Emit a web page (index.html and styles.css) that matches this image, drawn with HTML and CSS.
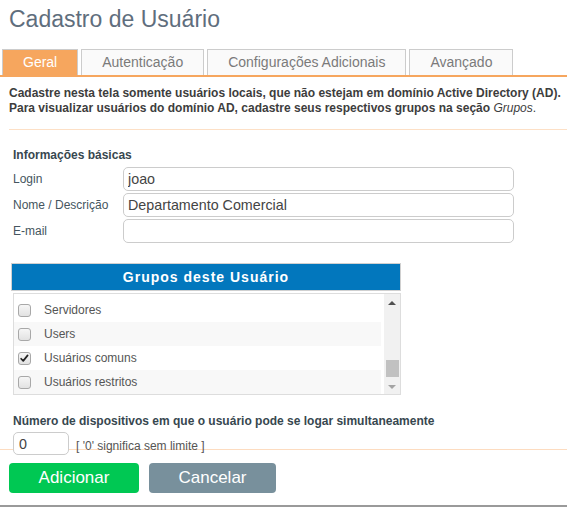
FILE: index.html
```html
<!DOCTYPE html>
<html lang="pt-BR">
<head>
<meta charset="utf-8">
<title>Cadastro de Usuário</title>
<link rel="stylesheet" href="styles.css">
</head>
<body>
<div class="page">
  <h1 class="title">Cadastro de Usuário</h1>
  <ul class="tabs">
    <li class="tab active">Geral</li>
    <li class="tab">Autenticação</li>
    <li class="tab">Configurações Adicionais</li>
    <li class="tab">Avançado</li>
  </ul>
  <p class="intro">Cadastre nesta tela somente usuários locais, que não estejam em domínio Active Directory (AD).<br>Para visualizar usuários do domínio AD, cadastre seus respectivos grupos na seção <span class="plain"><em>Grupos</em>.</span></p>
  <hr class="sep">
  <section class="basic">
    <h2 class="section-title">Informações básicas</h2>
    <div class="field"><label class="field-label">Login</label><input class="text-input" value="joao"></div>
    <div class="field"><label class="field-label">Nome / Descrição</label><input class="text-input" value="Departamento Comercial"></div>
    <div class="field"><label class="field-label">E-mail</label><input class="text-input" value=""></div>
  </section>
  <section class="groups">
    <div class="groups-header">Grupos deste Usuário</div>
    <div class="groups-box">
      <ul class="group-list">
        <li class="group-row"><span class="check"></span><span class="group-name">Servidores</span></li>
        <li class="group-row"><span class="check"></span><span class="group-name">Users</span></li>
        <li class="group-row"><span class="check checked"><svg viewBox="0 0 13 13" width="11" height="11"><path d="M2.5 6.8 L5 9.3 L10.2 2.8" fill="none" stroke="#222" stroke-width="2" stroke-linecap="round" stroke-linejoin="round"/></svg></span><span class="group-name">Usuários comuns</span></li>
        <li class="group-row"><span class="check"></span><span class="group-name">Usuários restritos</span></li>
      </ul>
      <div class="scrollbar">
        <span class="sb-btn"><span class="arrow-up"></span></span>
        <span class="sb-track"><span class="sb-thumb"></span></span>
        <span class="sb-btn sb-btn-down"><span class="arrow-down"></span></span>
      </div>
    </div>
  </section>
  <section class="devices">
    <h2 class="section-title">Número de dispositivos em que o usuário pode se logar simultaneamente</h2>
    <div class="devices-row"><input class="text-input small" value="0"><span class="hint">[ '0' significa sem limite ]</span></div>
  </section>
  <footer class="actions">
    <button class="btn btn-add">Adicionar</button>
    <button class="btn btn-cancel">Cancelar</button>
  </footer>
</div>
</body>
</html>
```

FILE: styles.css
```css
* { box-sizing: border-box; }

html, body {
  margin: 0;
  padding: 0;
  background: #fff;
}

body {
  font-family: "Liberation Sans", Arial, sans-serif;
  color: #404040;
}

.page {
  width: 567px;
  height: 507px;
  overflow: hidden;
}

.title {
  margin: 0;
  padding: 5px 9px 0;
  font-size: 23px;
  line-height: 28px;
  font-weight: normal;
  color: #5f6e7d;
}

.tabs {
  list-style: none;
  margin: 16px 0 0;
  padding: 0 0 0 2px;
  display: flex;
  gap: 3px;
  border-bottom: 2px solid #f6a65e;
}

.tab {
  padding: 0 20px;
  height: 26px;
  line-height: 25px;
  font-size: 14px;
  color: #7a7a7a;
  background: #fafafa;
  border: 1px solid #cccccc;
  border-bottom: none;
}

.tab.active {
  background: #f6a65e;
  color: #fff;
}

.intro {
  margin: 9px 0 0;
  padding: 0 0 0 9px;
  font-size: 12px;
  line-height: 15px;
  font-weight: bold;
  color: #3d3d3d;
  white-space: nowrap;
}

.intro .plain {
  font-weight: normal;
}

.sep {
  margin: 13px 0 0 9px;
  border: none;
  border-top: 1px solid #fde0c6;
  height: 0;
}

.section-title {
  margin: 0;
  font-size: 12px;
  line-height: 15px;
  font-weight: bold;
  color: #37474f;
}

.basic {
  margin-top: 18px;
  padding: 0 53px 0 13px;
}

.basic .section-title {
  margin-bottom: 4px;
}

.field {
  display: flex;
  align-items: center;
  margin-bottom: 2px;
}

.field-label {
  width: 110px;
  font-size: 12px;
  color: #455560;
}

.text-input {
  flex: 1;
  height: 24px;
  border: 1px solid #cccccc;
  border-radius: 5px;
  padding: 0 4px;
  font-family: "Liberation Sans", Arial, sans-serif;
  font-size: 14.3px;
  color: #444;
  background: #fff;
  outline: none;
}

.groups {
  margin: 20px 0 0 11px;
  width: 390px;
}

.groups-header {
  height: 28px;
  border: 1px solid #d0d0d0;
  background: #0277bd;
  color: #fff;
  font-size: 14px;
  font-weight: bold;
  letter-spacing: 1px;
  text-align: center;
  line-height: 26px;
}

.groups-box {
  margin: 2px 0 0 2px;
  border: 1px solid #dddddd;
  height: 102px;
  display: flex;
}

.group-list {
  list-style: none;
  margin: 0;
  padding: 4px 0 0;
  width: 367px;
  overflow: hidden;
}

.group-row {
  height: 24px;
  display: flex;
  align-items: center;
  gap: 13px;
  padding-left: 4px;
  font-size: 12px;
  color: #555;
}

.group-row:nth-child(even) {
  background: #f8f8f8;
}

.check {
  width: 13px;
  height: 13px;
  border: 1px solid #a8a8a8;
  border-radius: 3px;
  background: linear-gradient(#f6f6f6, #e2e2e2);
  display: flex;
  align-items: center;
  justify-content: center;
}

.check svg {
  display: block;
}

.scrollbar {
  margin-left: 3px;
  width: 16px;
  background: #f1f1f1;
  display: flex;
  flex-direction: column;
}

.sb-btn {
  height: 17px;
  display: flex;
  align-items: center;
  justify-content: center;
}

.sb-btn-down {
  height: 14px;
}

.arrow-up {
  width: 0;
  height: 0;
  border-left: 4px solid transparent;
  border-right: 4px solid transparent;
  border-bottom: 4px solid #505050;
}

.arrow-down {
  width: 0;
  height: 0;
  border-left: 4px solid transparent;
  border-right: 4px solid transparent;
  border-top: 4px solid #a3a3a3;
}

.sb-track {
  flex: 1;
  display: flex;
  flex-direction: column;
}

.sb-thumb {
  margin: 49px 0 0 2px;
  width: 13px;
  height: 17px;
  background: #c1c1c1;
}

.devices {
  margin: 19px 0 -6px;
  padding-left: 13px;
}

.devices-row {
  display: flex;
  align-items: center;
  margin-top: 3px;
  gap: 7px;
}

.text-input.small {
  flex: none;
  width: 56px;
  height: 23px;
  padding: 0 5px;
}

.hint {
  font-size: 12px;
  color: #555;
  padding-top: 5px;
}

.actions {
  border-top: 1px solid #fddcc0;
  border-bottom: 2px solid #9a9a9a;
  padding: 13px 0 12px 9px;
  display: flex;
  gap: 10px;
}

.btn {
  height: 30px;
  border: none;
  border-radius: 4px;
  color: #fff;
  font-family: "Liberation Sans", Arial, sans-serif;
  font-size: 17px;
  cursor: pointer;
}

.btn-add {
  width: 130px;
  background: #00c853;
}

.btn-cancel {
  width: 127px;
  background: #78909c;
}
```
